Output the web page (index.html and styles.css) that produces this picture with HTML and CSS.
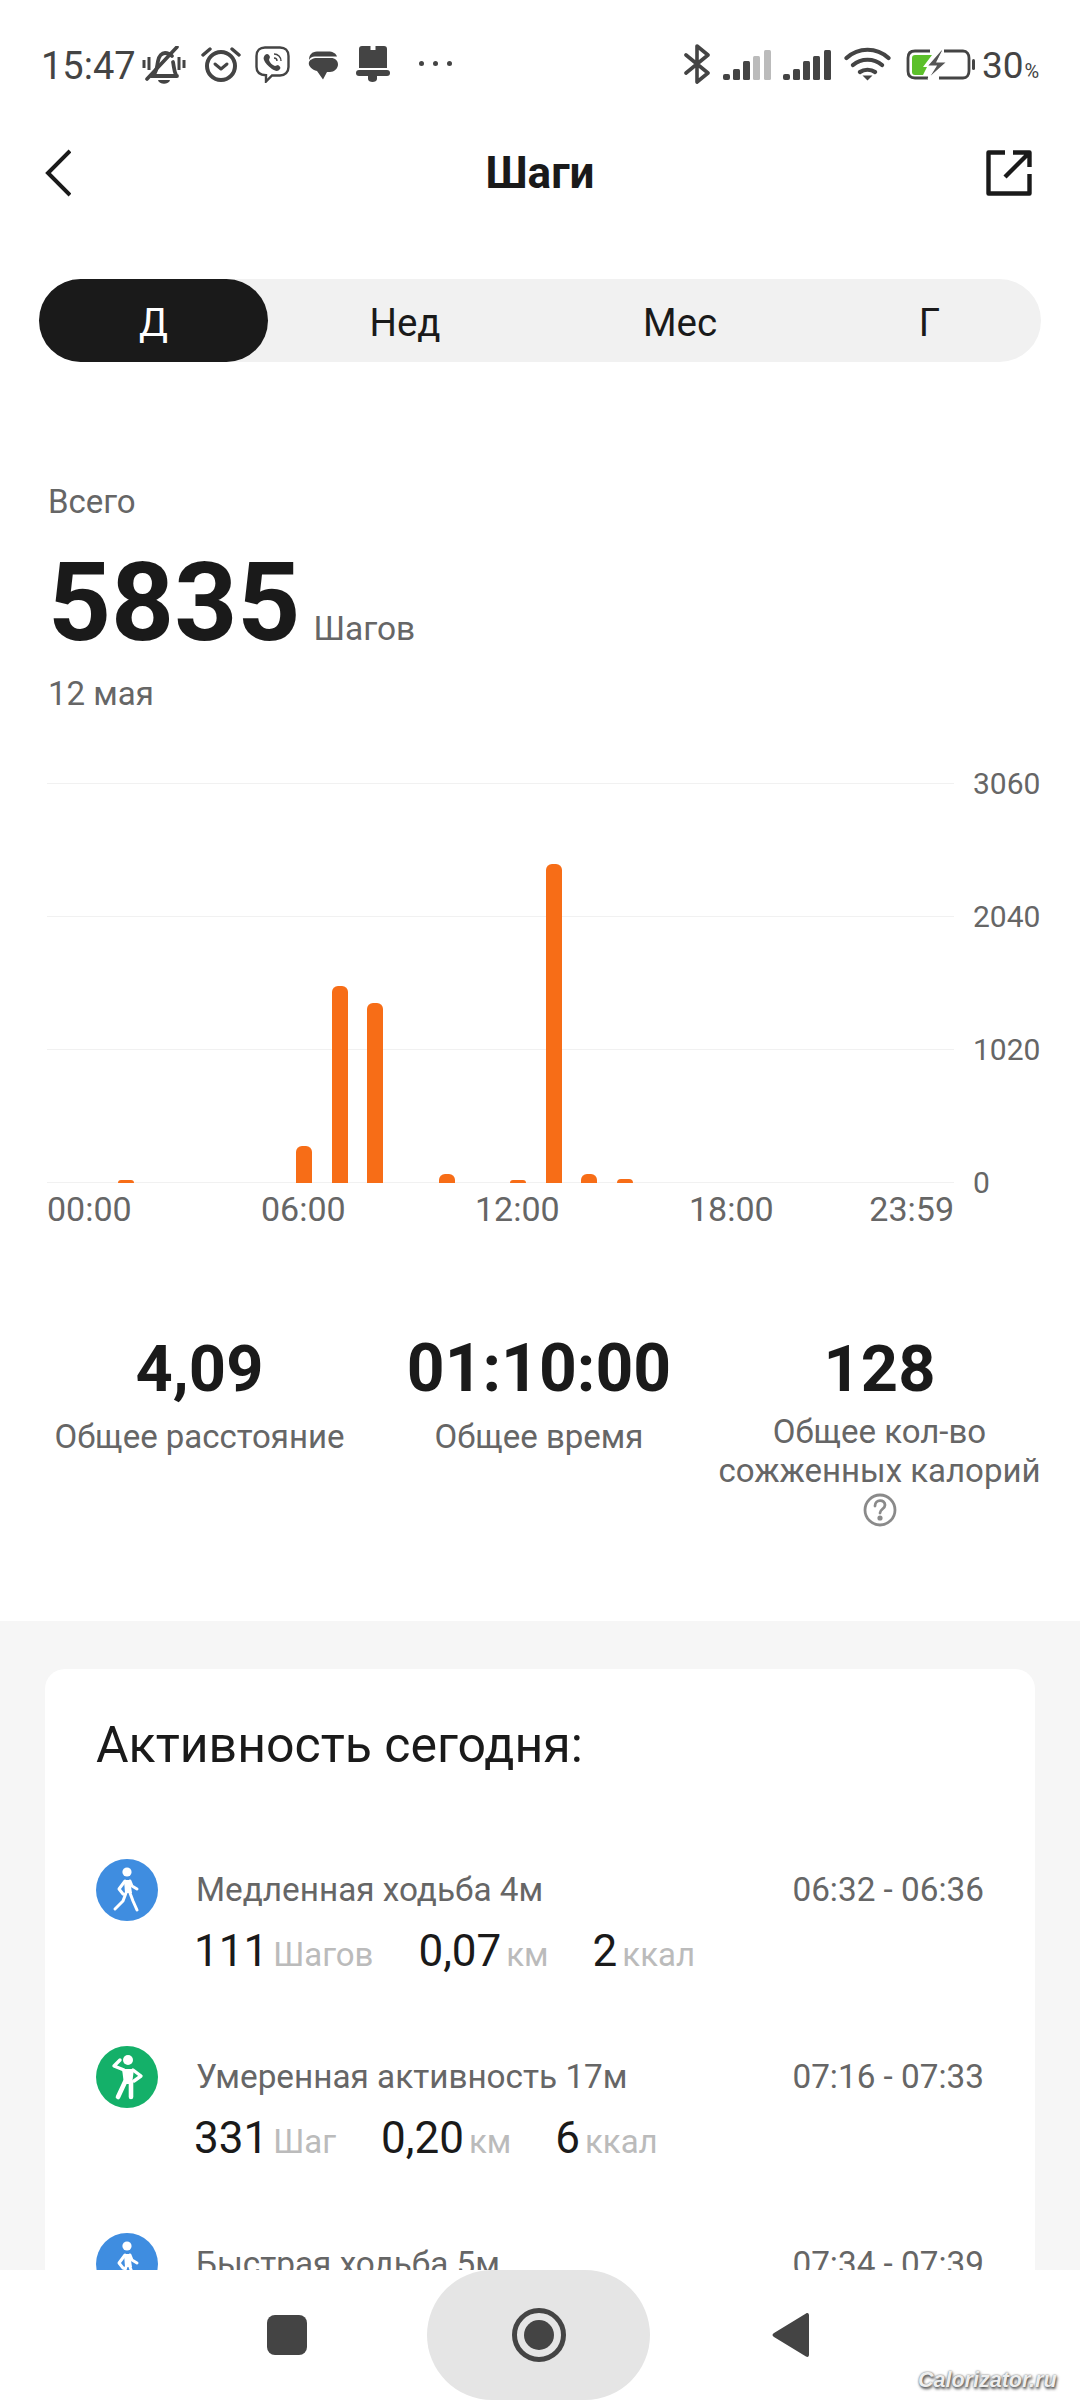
FILE: index.html
```html
<!DOCTYPE html>
<html lang="ru">
<head>
<meta charset="utf-8">
<title>Шаги</title>
<link rel="stylesheet" href="styles.css">
</head>
<body>
<div class="screen">
  <div class="status">
    <div class="status-left">
      <span class="time">15:47</span>
      <svg class="si mute" viewBox="0 0 44 38" fill="none" stroke="#444" stroke-width="3.8"><path d="M2 14v8M7 11v13M37 11v13M42 14v8" stroke-width="3"/><path d="M12 28c3-3 3-8 4-13 1-5 4-8 7-8s5 1 7 3M31 16c1 5 1 9 3 13M9 30h26" stroke-linecap="round"/><path d="M5 33 35 1" stroke-width="3.6" stroke-linecap="round"/><path d="M16 34h12c-1 5-11 5-12 0z" fill="#444" stroke="none"/></svg>
      <svg class="si alarm" viewBox="0 0 40 36" fill="none" stroke="#444"><circle cx="20" cy="20" r="14" stroke-width="4"/><path d="M14 18l6 5 6-5" stroke-width="3" stroke-linecap="round" stroke-linejoin="round"/><path d="M2 9l7-6M38 9l-7-6" stroke-width="3.4" stroke-linecap="round"/></svg>
      <svg class="si viber" viewBox="0 0 35 37" fill="none" stroke="#444"><path d="M10 1.500h15c5 0 8.500 3 8.500 8.500v11c0 5-3.500 8.500-8.500 8.500H17l-6 6v-6.300C5 29 1.500 26 1.500 21V10C1.500 4.500 5 1.500 10 1.500z" stroke-width="2.4"/><path d="M10 9c2-2 4-1 5 2l-1 3c1 3 3 5 6 6l3-1c2 1 3 3 2 4-2 3-5 2-8 0-4-3-7-6-8-9-1-2 0-4 1-5z" fill="#444" stroke="none"/><path d="M19 8c4 0 7 3 7 7M19 12c2 0 3 1 3 3" stroke-width="1.400"/></svg>
      <svg class="si msg" viewBox="0 0 30 29"><path d="M9 .500h11c5 0 8 2 9 5H7C4 5.500 2 7 1 9c0-5 3-8.500 8-8.500z" fill="#444"/><path d="M9 7h14c4 0 7 2.500 7 6.500S26 21 22 21h-3l-4 7.500L9 20C4 19 .500 15 .800 12 1 9 5 7 9 7z" fill="#444"/></svg>
      <svg class="si box" viewBox="0 0 34 36" fill="#444"><path d="M3 3c0-2 1-3 3-3h8.500v4h5V0H28c2 0 3 1 3 3v19H3z"/><rect x="0" y="24" width="34" height="6" rx="3"/><path d="M12 30h9v3c0 4-9 4-9 0z"/></svg>
      <span class="dots"><i></i><i></i><i></i></span>
    </div>
    <div class="status-right">
      <svg class="si bt" viewBox="0 0 26 40" fill="none" stroke="#444" stroke-width="3.600" stroke-linejoin="round" stroke-linecap="round"><path d="M2 11l22 18-11 9V2l11 9L2 29"/></svg>
      <svg class="si sig" viewBox="0 0 48 30"><rect x="0" y="24" width="7" height="6" rx="2" fill="#444"/><rect x="10" y="19" width="7" height="11" rx="1.500" fill="#444"/><rect x="20" y="11" width="7" height="19" rx="1.500" fill="#444"/><rect x="30" y="6" width="7" height="24" rx="1.500" fill="#bbb"/><rect x="41" y="0" width="7" height="30" rx="1.500" fill="#bbb"/></svg>
      <svg class="si sig" viewBox="0 0 48 30"><rect x="0" y="24" width="7" height="6" rx="2" fill="#444"/><rect x="10" y="19" width="7" height="11" rx="1.500" fill="#444"/><rect x="20" y="11" width="7" height="19" rx="1.500" fill="#444"/><rect x="30" y="6" width="7" height="24" rx="1.500" fill="#444"/><rect x="41" y="0" width="7" height="30" rx="1.500" fill="#444"/></svg>
      <svg class="si wifi" viewBox="0 0 47 34" fill="none" stroke="#444" stroke-width="4.200" stroke-linecap="round"><path d="M2.500 11c12-11 30-11 42 0M9 18c8-7 21-7 29 0M16 25c4-3 11-3 15 0"/><path d="M18.500 28.500h10l-5 5z" fill="#444" stroke="none"/></svg>
      <svg class="si batt" viewBox="0 0 69 31"><path d="M24 2H9C4 2 2 5 2 9v13c0 4 2 7 7 7h13M38 2h19c4 0 6 3 6 7v13c0 4-2 7-6 7H33" fill="none" stroke="#444" stroke-width="2.800"/><path d="M9 6h17l-9 12h4l-4 8H9c-2 0-3-1-3-3V9c0-2 1-3 3-3z" fill="#5cc02a"/><path d="M35 1 21 17h9l-8 13 19-17h-10l6-12z" fill="#555" stroke="#fff" stroke-width="1.200"/><rect x="66" y="10" width="3" height="11" rx="1.500" fill="#444"/></svg>
      <span class="batt-text">30<small>%</small></span>
    </div>
  </div>

  <header class="topbar">
    <svg class="back" viewBox="0 0 26 48" fill="none" stroke="#1a1a1a" stroke-width="4"><path d="M25 2 3 24l22 22"/></svg>
    <h1 class="title">Шаги</h1>
    <svg class="share" viewBox="0 0 46 46" fill="none" stroke="#1a1a1a" stroke-width="4.400"><path d="M19 2.500H2.500v41h41V24M19 27 42 4M27 2.500h16.500V17" stroke-linejoin="round"/></svg>
  </header>

  <nav class="tabs">
    <span class="tab active">Д</span>
    <span class="tab">Нед</span>
    <span class="tab">Мес</span>
    <span class="tab">Г</span>
  </nav>

  <section class="summary">
    <div class="muted">Всего</div>
    <div class="total"><b>5835</b><span>Шагов</span></div>
    <div class="muted">12 мая</div>
  </section>

  <section class="chart">
    <div class="plot">
      <div class="row"><i></i><span>3060</span></div>
      <div class="row"><i></i><span>2040</span></div>
      <div class="row"><i></i><span>1020</span></div>
      <div class="row"><i></i><span>0</span></div>
      <div class="bars">
        <u></u><u style="height:3px"></u><u></u><u></u><u></u><u></u>
        <u style="height:37px"></u><u style="height:197px"></u><u style="height:180px"></u><u></u>
        <u style="height:9px"></u><u></u><u style="height:3px"></u><u style="height:319px"></u>
        <u style="height:9px"></u><u style="height:4px"></u>
      </div>
    </div>
    <div class="hours">
      <span>00:00</span><span>06:00</span><span>12:00</span><span>18:00</span><span>23:59</span>
    </div>
  </section>

  <section class="stats">
    <div class="stat"><b>4,09</b><span>Общее расстояние</span></div>
    <div class="stat"><b>01:10:00</b><span>Общее время</span></div>
    <div class="stat tight"><b>128</b><span>Общее кол-во сожженных калорий</span>
      <svg class="help" viewBox="0 0 34 34" fill="none" stroke="#8a8a8a" stroke-width="2.800"><circle cx="17" cy="17" r="15"/><path d="M12 13c0-7 10-7 10-1 0 4-5 4-5 8" stroke-linecap="round"/><circle cx="17" cy="25" r="1.200" fill="#8a8a8a"/></svg>
    </div>
  </section>

  <section class="gray">
    <div class="card">
      <h2>Активность сегодня:</h2>
      <div class="activity">
        <svg class="badge" viewBox="0 0 62 62"><circle cx="31" cy="31" r="31" fill="#3f8de0"/><use href="#walk"/></svg>
        <div class="body">
          <div class="line"><span>Медленная ходьба 4м</span><span>06:32 - 06:36</span></div>
          <div class="vals"><b>111</b><em>Шагов</em><b class="g1">0,07</b><em>км</em><b class="g2">2</b><em>ккал</em></div>
        </div>
      </div>
      <div class="activity">
        <svg class="badge" viewBox="0 0 62 62"><circle cx="31" cy="31" r="31" fill="#14b069"/><circle cx="32" cy="14" r="5" fill="#fff"/><path d="M26 23h12l-2 15h-8z" fill="#fff"/><g fill="none" stroke="#fff" stroke-linecap="round" stroke-linejoin="round"><path d="M28 24l-10-4 6-6M37 24l8 6-7 5" stroke-width="3.400"/><path d="M29 36l-7 15M35 36v15" stroke-width="4.600"/></g></svg>
        <div class="body">
          <div class="line"><span>Умеренная активность 17м</span><span>07:16 - 07:33</span></div>
          <div class="vals"><b>331</b><em>Шаг</em><b class="g1">0,20</b><em>км</em><b class="g2">6</b><em>ккал</em></div>
        </div>
      </div>
      <div class="activity">
        <svg class="badge" viewBox="0 0 62 62"><circle cx="31" cy="31" r="31" fill="#3f8de0"/><use href="#walk"/></svg>
        <div class="body">
          <div class="line"><span>Быстрая ходьба 5м</span><span>07:34 - 07:39</span></div>
        </div>
      </div>
    </div>
  </section>

  <div class="navbar">
    <svg class="nav-stop" viewBox="0 0 40 40"><rect width="40" height="40" rx="8" fill="#444"/></svg>
    <div class="nav-home"><svg viewBox="0 0 54 54" fill="none"><circle cx="27" cy="27" r="24.500" stroke="#444" stroke-width="5"/><circle cx="27" cy="27" r="15" fill="#444"/></svg></div>
    <svg class="nav-back" viewBox="0 0 38 46"><path d="M34 1.500c2-1 3 0 3 2v39c0 2-1 3-3 2L2 25c-2-1-2-3 0-4z" fill="#444"/></svg>
  </div>
  <div class="watermark">Calorizator.ru</div>
</div>

<svg class="defs" width="0" height="0" aria-hidden="true"><defs>
  <g id="walk"><circle cx="31" cy="13" r="4.600" fill="#fff"/><path d="M28 21h6l2 13h-7z" fill="#fff"/><g fill="none" stroke="#fff" stroke-width="3" stroke-linecap="round" stroke-linejoin="round"><path d="M29 22l-6 8 4 5M34 22l2 5 5 3M30 34l-3 8-8 8M34 34l3 8 4 9"/></g></g>
</defs></svg>
</body>
</html>
```

FILE: styles.css
```css
* { box-sizing: border-box; }
html, body { margin: 0; padding: 0; background: #fff; }
body { font-family: Roboto, "Noto Sans", sans-serif; color: #1a1a1a; }
.screen { position: relative; width: 1080px; height: 2400px; overflow: hidden; background: #fff; }
.defs { position: absolute; }

.status { height: 130px; padding: 44px 40px 0 41px; display: flex; justify-content: space-between; align-items: flex-start; color: #444; }
.status-left, .status-right { display: flex; align-items: flex-start; height: 40px; }
.si { display: block; flex: none; }
.time { font-size: 38px; line-height: 40px; margin-top: 2px; width: 101px; }
.mute { width: 44px; height: 38px; margin-top: 2px; }
.alarm { width: 40px; height: 36px; margin: 2px 0 0 15px; }
.viber { width: 35px; height: 37px; margin: 2px 0 0 14px; }
.msg { width: 30px; height: 29px; margin: 7px 0 0 18px; }
.box { width: 34px; height: 36px; margin: 2px 0 0 18px; }
.dots { display: flex; gap: 9px; margin: 17px 0 0 29px; }
.dots i { width: 5px; height: 5px; border-radius: 50%; background: #444; }
.bt { width: 26px; height: 40px; }
.sig { width: 48px; height: 30px; margin: 6px 0 0 13px; }
.sig + .sig { margin-left: 12px; }
.wifi { width: 47px; height: 34px; margin: 3px 0 0 13px; }
.batt { width: 69px; height: 31px; margin: 5px 0 0 15px; }
.batt-text { font-size: 37px; line-height: 40px; margin-left: 7px; width: 58px; white-space: nowrap; margin-top: 2px; }
.batt-text small { font-size: 20px; margin-left: 1px; }

.topbar { display: flex; justify-content: space-between; align-items: center; height: 64px; padding: 0 48px 0 45px; position: relative; margin-top: 11px; }
.back { width: 26px; height: 48px; }
.share { width: 46px; height: 46px; }
.title { position: absolute; left: 0; right: 0; top: 0; margin: 0; text-align: center; font-size: 44px; font-weight: 700; line-height: 64px; }

.tabs { display: grid; grid-template-columns: 229px 274px 276px 223px; height: 83px; margin: 74px 39px 0 39px; background: #f1f1f1; border-radius: 42px; }
.tab { display: flex; align-items: center; justify-content: center; font-size: 38.5px; color: #1a1a1a; padding-top: 3px; }
.tab.active { background: #1a1a1a; color: #fff; border-radius: 42px; }

.summary { padding: 122px 0 0 48px; }
.muted { font-size: 33px; line-height: 36px; color: #666; }
.total { display: flex; align-items: baseline; height: 156px; line-height: 166px; }
.total b { font-size: 110px; font-weight: 700; color: #1a1a1a; }
.total span { font-size: 33.5px; color: #666; margin-left: 13px; }

.chart { margin-top: 53px; padding-left: 47px; }
.plot { position: relative; height: 435px; display: flex; flex-direction: column; justify-content: space-between; }
.row { height: 36px; display: flex; align-items: center; }
.row i { display: block; width: 907px; height: 1px; background: #f1f1f1; }
.row span { margin-left: 19px; font-size: 30px; color: #666; }
.bars { position: absolute; left: 25px; bottom: 17px; display: flex; align-items: flex-end; }
.bars u { display: flex; justify-content: center; width: 35.7px; height: 0; }
.bars u::before { content: ""; width: 16px; height: 100%; background: #f76d17; border-radius: 6px 6px 0 0; }
.hours { display: grid; grid-template-columns: 214px 214px 214px 1fr auto; width: 907px; font-size: 34px; line-height: 36px; color: #666; margin-top: -9px; }

.stats { display: grid; grid-template-columns: 339px 340px 341px; margin: 106px 30px 0; height: 288px; text-align: center; }
.stat { display: flex; flex-direction: column; align-items: center; }
.stat b { font-size: 65px; line-height: 72px; font-weight: 700; color: #1a1a1a; }
.stat:nth-child(2) b { font-size: 66px; }
.stat span { font-size: 33px; line-height: 39px; color: #666; margin-top: 12px; }
.stat.tight span { margin-top: 7px; }
.help { width: 34px; height: 34px; margin-top: 3px; }

.gray { background: #f6f6f6; height: 782px; padding: 48px 45px 0; }
.card { background: #fff; border-radius: 20px; padding: 46px 51px 0 51px; height: 800px; }
.card h2 { margin: 0; font-size: 50px; font-weight: 400; line-height: 60px; color: #1a1a1a; }
.activity { display: flex; gap: 38px; height: 187px; }
.activity:first-of-type { margin-top: 84px; }
.badge { width: 62px; height: 62px; flex: none; margin-top: 0; }
.body { flex: 1; }
.line { display: flex; justify-content: space-between; font-size: 33.3px; line-height: 40px; color: #666; margin-top: 11px; }
.vals { display: flex; align-items: baseline; margin-top: 15px; margin-left: -2px; }
.vals b { font-size: 44px; font-weight: 400; line-height: 52px; color: #1a1a1a; }
.vals em { font-style: normal; font-size: 33px; color: #bbb; margin-left: 5px; }
.vals .g1 { margin-left: 45px; }
.vals .g2 { margin-left: 44px; }

.navbar { position: absolute; left: 0; right: 0; bottom: 0; height: 130px; background: #fff; display: grid; grid-template-columns: 267px 40px 120px 223px 122px 38px; align-items: center; }
.nav-stop { grid-column: 2; width: 40px; height: 40px; }
.nav-home { grid-column: 4; width: 223px; height: 130px; background: #e5e5e5; border-radius: 66px; display: flex; align-items: center; justify-content: center; }
.nav-home svg { width: 54px; height: 54px; }
.nav-back { grid-column: 6; width: 38px; height: 46px; }
.watermark { position: absolute; left: 918px; top: 2368px; font: italic 700 21.5px "Liberation Sans", sans-serif; color: #eee; text-shadow: 1px 2px 3px #444, 0 0 2px #666; }
```
